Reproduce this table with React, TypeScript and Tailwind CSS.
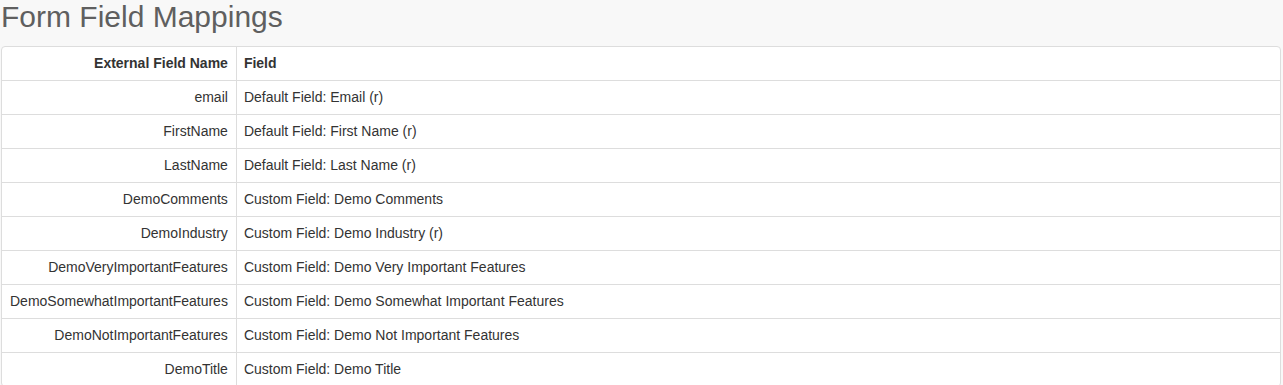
import React from "react";

const rows: [string, string][] = [
  ["email", "Default Field: Email (r)"],
  ["FirstName", "Default Field: First Name (r)"],
  ["LastName", "Default Field: Last Name (r)"],
  ["DemoComments", "Custom Field: Demo Comments"],
  ["DemoIndustry", "Custom Field: Demo Industry (r)"],
  ["DemoVeryImportantFeatures", "Custom Field: Demo Very Important Features"],
  ["DemoSomewhatImportantFeatures", "Custom Field: Demo Somewhat Important Features"],
  ["DemoNotImportantFeatures", "Custom Field: Demo Not Important Features"],
  ["DemoTitle", "Custom Field: Demo Title"],
];

export default function App() {
  return (
    <div
      className="min-h-[385px] w-full bg-[#f8f8f8] text-[#333]"
      style={{ fontFamily: '"Liberation Sans", Arial, sans-serif' }}
    >
      <h1 className="h-[46px] pl-[1px] text-[30px] leading-[33px] font-normal text-[#5f5f5f]">
        Form Field Mappings
      </h1>
      <div className="ml-[1px] w-[1280px] rounded-[4px] border border-[#dddddd] bg-white">
        <table className="w-full border-collapse text-[14px]">
          <thead>
            <tr className="h-[33px]">
              <th className="w-[234px] border-r border-[#dddddd] px-2 text-right font-bold">
                External Field Name
              </th>
              <th className="pl-[7px] pr-2 text-left font-bold">Field</th>
            </tr>
          </thead>
          <tbody>
            {rows.map(([a, b]) => (
              <tr key={a} className="h-[34px] border-t border-[#dddddd]">
                <td className="border-r border-[#dddddd] px-2 text-right">{a}</td>
                <td className="pl-[7px] pr-2 text-left">{b}</td>
              </tr>
            ))}
          </tbody>
        </table>
      </div>
    </div>
  );
}
